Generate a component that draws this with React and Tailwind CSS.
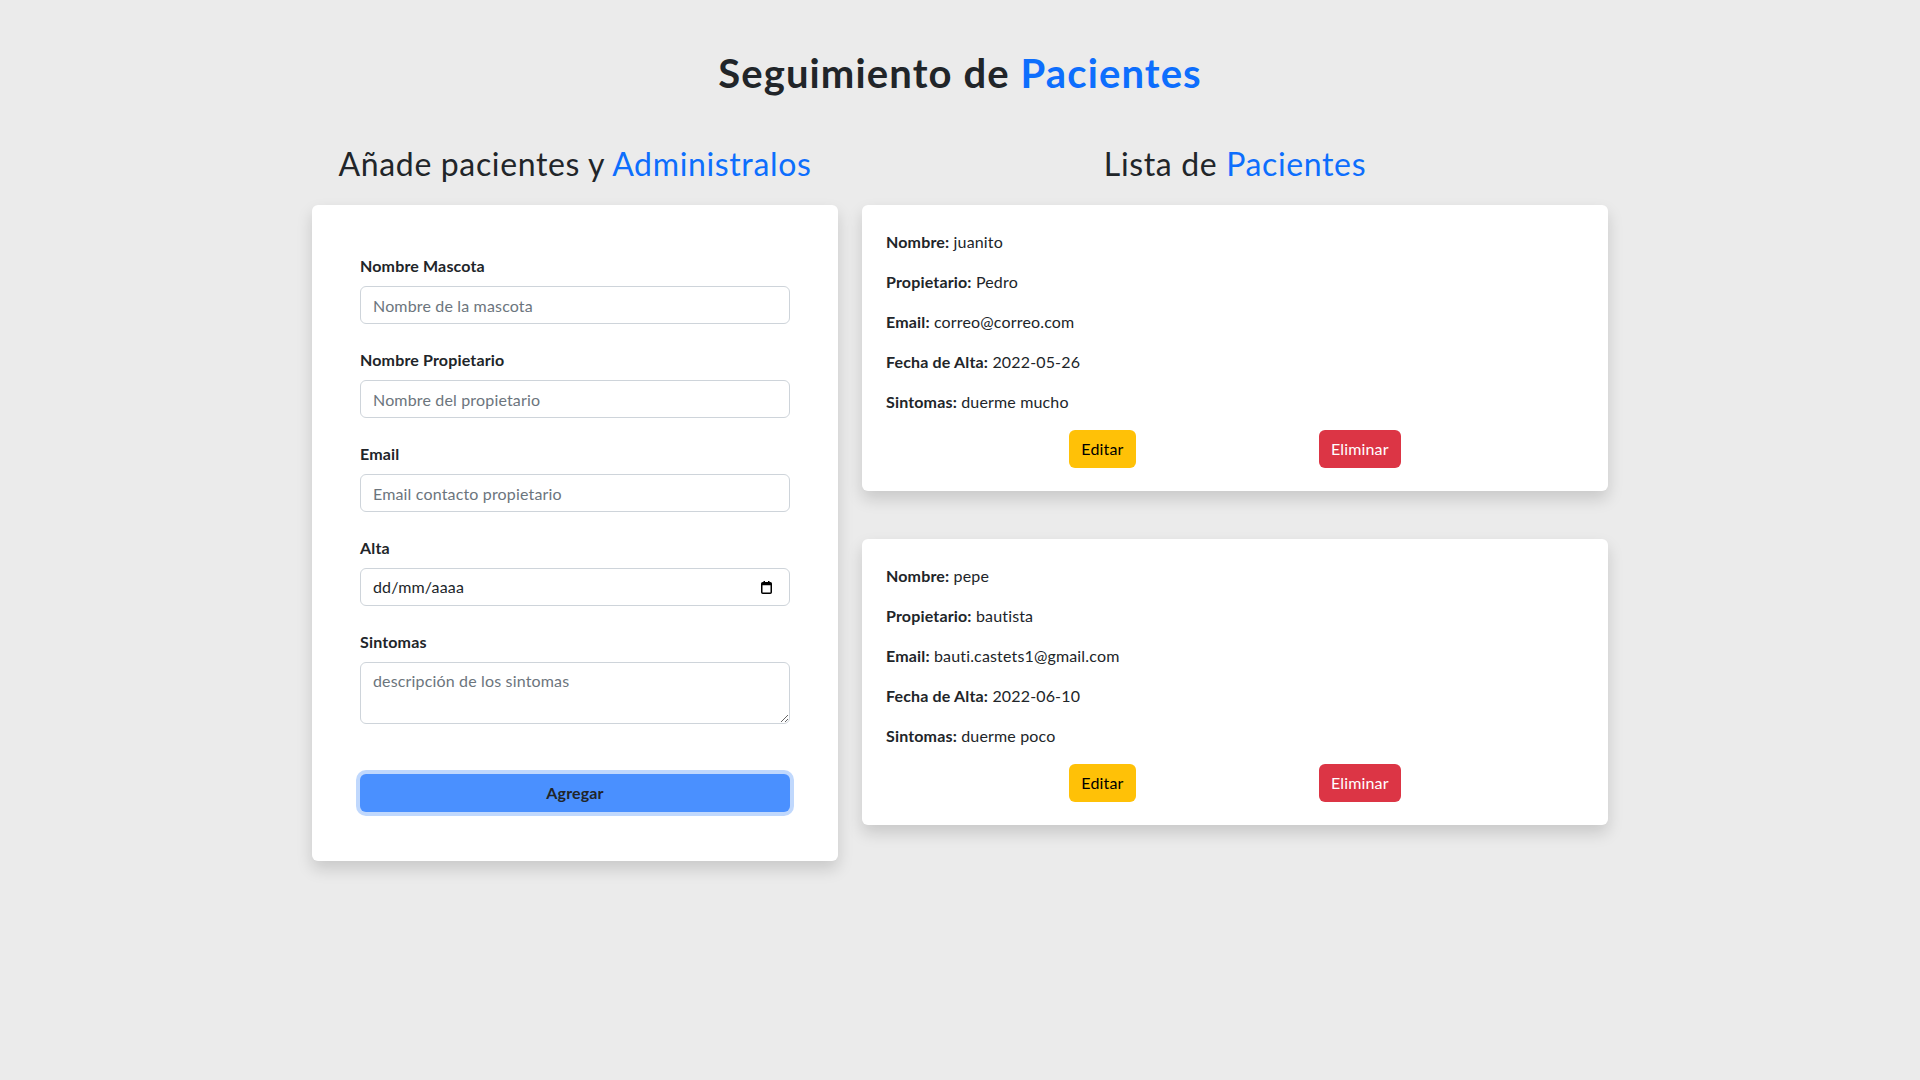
import React from "react";

const pacientes = [
  {
    id: 1,
    nombre: "juanito",
    propietario: "Pedro",
    email: "correo@correo.com",
    fecha: "2022-05-26",
    sintomas: "duerme mucho",
  },
  {
    id: 2,
    nombre: "pepe",
    propietario: "bautista",
    email: "bauti.castets1@gmail.com",
    fecha: "2022-06-10",
    sintomas: "duerme poco",
  },
];

const inputClass =
  "block w-full h-[38px] rounded-md border border-[#ced4da] bg-white px-3 py-1.5 text-base leading-6 text-[#212529] placeholder:text-[#6c757d] outline-none";

const Campo = ({ label, children }) => (
  <div className="mb-6">
    <label className="mb-2 block text-base font-bold leading-6">{label}</label>
    {children}
  </div>
);

const Formulario = () => (
  <div>
    <h2 className="mb-[22px] text-center text-[32px] leading-[1.2] tracking-[0.02em]">
      Añade pacientes y <span className="text-[#0d6efd]">Administralos</span>
    </h2>
    <form className="rounded-md bg-white px-12 pb-[49px] pt-[49px] shadow-[0_8px_16px_rgba(0,0,0,0.15)] tracking-[0.01em]">
      <Campo label="Nombre Mascota">
        <input type="text" className={inputClass} placeholder="Nombre de la mascota" />
      </Campo>
      <Campo label="Nombre Propietario">
        <input type="text" className={inputClass} placeholder="Nombre del propietario" />
      </Campo>
      <Campo label="Email">
        <input type="email" className={inputClass} placeholder="Email contacto propietario" />
      </Campo>
      <Campo label="Alta">
        <div className="flex h-[38px] w-full items-center justify-between rounded-md border border-[#ced4da] bg-white pl-3 pr-[17px]">
          <span className="leading-6">dd/mm/aaaa</span>
          <svg width="11" height="13" viewBox="0 0 11 13" fill="none">
            <rect x="0.75" y="1.75" width="9.5" height="10.5" rx="1" stroke="#000" strokeWidth="1.5" />
            <rect x="0.75" y="1.75" width="9.5" height="2.5" fill="#000" />
            <rect x="2.5" y="0" width="1.5" height="2.5" fill="#000" />
            <rect x="7" y="0" width="1.5" height="2.5" fill="#000" />
          </svg>
        </div>
      </Campo>
      <div>
        <label className="mb-2 block text-base font-bold leading-6">Sintomas</label>
        <textarea
          rows={2}
          className="block h-[62px] w-full rounded-md border border-[#ced4da] bg-white px-3 py-1.5 text-base leading-6 placeholder:text-[#6c757d] outline-none"
          placeholder="descripción de los sintomas"
        />
      </div>
      <button
        type="button"
        className="mt-[50px] block h-[38px] w-full rounded-md bg-[#4a90ff] text-base font-bold text-[#212529] shadow-[0_0_0_4px_#c0d8fd]"
      >
        Agregar
      </button>
    </form>
  </div>
);

const Paciente = ({ paciente }) => (
  <div className="mb-12 rounded-md bg-white px-6 pb-[23px] pt-[25px] tracking-[0.01em] shadow-[0_8px_16px_rgba(0,0,0,0.15)]">
    <p className="mb-4 leading-6">
      <span className="font-bold">Nombre:</span> {paciente.nombre}
    </p>
    <p className="mb-4 leading-6">
      <span className="font-bold">Propietario:</span> {paciente.propietario}
    </p>
    <p className="mb-4 leading-6">
      <span className="font-bold">Email:</span> {paciente.email}
    </p>
    <p className="mb-4 leading-6">
      <span className="font-bold">Fecha de Alta:</span> {paciente.fecha}
    </p>
    <p className="mb-4 leading-6">
      <span className="font-bold">Sintomas:</span> {paciente.sintomas}
    </p>
    <div className="flex justify-evenly">
      <button type="button" className="h-[38px] rounded-md bg-[#ffc107] px-3 text-black">
        Editar
      </button>
      <button type="button" className="h-[38px] rounded-md bg-[#dc3545] px-3 text-white">
        Eliminar
      </button>
    </div>
  </div>
);

export default function App() {
  return (
    <div className="min-h-screen bg-[#ebebeb] font-['Lato','Noto_Sans',sans-serif] text-base text-[#212529]">
      <div className="mx-auto w-[1320px] pt-[49px]">
        <h1 className="text-center text-[40px] font-bold leading-[1.2] tracking-[0.028em]">
          Seguimiento de <span className="text-[#0d6efd]">Pacientes</span>
        </h1>
        <div className="mt-[48px] flex">
          <div className="w-5/12 px-3">
            <Formulario />
          </div>
          <div className="w-7/12 px-3">
            <h2 className="mb-[22px] text-center text-[32px] leading-[1.2] tracking-[0.02em]">
              Lista de <span className="text-[#0d6efd]">Pacientes</span>
            </h2>
            {pacientes.map((p) => (
              <Paciente key={p.id} paciente={p} />
            ))}
          </div>
        </div>
      </div>
    </div>
  );
}
